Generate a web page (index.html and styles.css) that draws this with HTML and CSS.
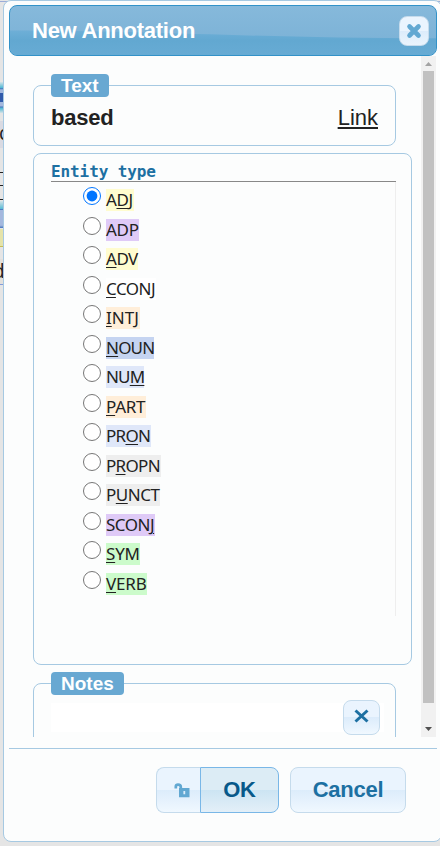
FILE: index.html
```html
<!DOCTYPE html>
<html lang="en">
<head>
<meta charset="utf-8">
<title>New Annotation</title>
<link rel="stylesheet" href="styles.css">
</head>
<body>
<div class="backdrop" aria-hidden="true">
  <i class="bd-top"></i><i class="bd-box"></i><i class="bd-band"><b>c</b></i><i class="bd-lines"></i><i class="bd-blue"></i><i class="bd-yellow"></i><i class="bd-word"><b>d</b></i>
</div>
<main class="dialog">
  <header class="titlebar">
    <svg class="gloss" viewBox="0 0 426 50" preserveAspectRatio="none"><path d="M0 25C150 25 250 33 426 33V50H0Z" fill="url(#g)"/><defs><linearGradient id="g" x2="0" y2="1"><stop stop-color="#6eafd7"/><stop offset=".4" stop-color="#62a8d1"/><stop offset="1" stop-color="#67abd4"/></linearGradient></defs></svg>
    <h1>New Annotation</h1>
    <button class="close" aria-label="Close"><svg width="16" height="16" viewBox="0 0 16 16"><path d="M3.5 3.5 12.5 12.5M12.5 3.5 3.5 12.5" stroke="#62a8d2" stroke-width="4.6" stroke-linecap="round"/></svg></button>
  </header>
  <div class="content">
    <div class="forms">
      <section class="box text-box">
        <h2 class="legend">Text</h2>
        <div class="text-row"><strong>based</strong><a>Link</a></div>
      </section>
      <section class="box entity-box">
        <h3>Entity type</h3>
        <div class="types">
          <label><input type="radio" name="t" checked><span class="tag yellow w-adj">A<u>D</u>J</span></label>
          <label><input type="radio" name="t"><span class="tag purple w-adp">ADP</span></label>
          <label><input type="radio" name="t"><span class="tag yellow w-adv"><u>A</u>DV</span></label>
          <label><input type="radio" name="t"><span class="tag white w-cconj"><u>C</u>CONJ</span></label>
          <label><input type="radio" name="t"><span class="tag orange w-intj"><u>I</u>NTJ</span></label>
          <label><input type="radio" name="t"><span class="tag blue w-noun"><u>N</u>OUN</span></label>
          <label><input type="radio" name="t"><span class="tag pale w-num">NU<u>M</u></span></label>
          <label><input type="radio" name="t"><span class="tag orange w-part"><u>P</u>ART</span></label>
          <label><input type="radio" name="t"><span class="tag pale w-pron">PR<u>O</u>N</span></label>
          <label><input type="radio" name="t"><span class="tag gray w-propn">P<u>R</u>OPN</span></label>
          <label><input type="radio" name="t"><span class="tag gray w-punct">P<u>U</u>NCT</span></label>
          <label><input type="radio" name="t"><span class="tag purple w-sconj">SCON<u>J</u></span></label>
          <label><input type="radio" name="t"><span class="tag green w-sym"><u>S</u>YM</span></label>
          <label><input type="radio" name="t"><span class="tag green w-verb"><u>V</u>ERB</span></label>
        </div>
      </section>
      <section class="box notes-box">
        <h2 class="legend">Notes</h2>
        <div class="notes-row"><button class="btn clear" aria-label="Clear"><svg width="15" height="14" viewBox="0 0 15 14"><path d="M1.5 1.5 13.5 12.5M13.5 1.5 1.5 12.5" stroke="#1d70a2" stroke-width="3"/></svg></button></div>
      </section>
    </div>
    <div class="scrollbar">
      <svg width="7" height="4" viewBox="0 0 7 4"><path d="M0 4 3.5 0 7 4Z" fill="#a3a3a3"/></svg>
      <i class="thumb"></i>
      <svg width="7" height="4" viewBox="0 0 7 4"><path d="M0 0 3.5 4 7 0Z" fill="#505050"/></svg>
    </div>
  </div>
  <footer class="actions">
    <button class="btn lock" aria-label="Unlocked"><svg width="16" height="15" viewBox="0 0 16 15"><path d="M1.8 5.5V3.5Q1.8 1.6 4 1.6 6.8 1.6 6.8 4V7" fill="none" stroke="#62a8d2" stroke-width="2.7"/><path fill-rule="evenodd" d="M5 5H15.5V14.3H5ZM9.4 8V11.3H11.2V8Z" fill="#62a8d2"/></svg></button><button class="btn ok">OK</button><button class="btn cancel">Cancel</button>
  </footer>
</main>
</body>
</html>
```
FILE: styles.css
```css
* { box-sizing: border-box; }
body {
  margin: 0;
  width: 440px;
  height: 846px;
  overflow: hidden;
  background: #e5e5e5;
  font-family: "Liberation Sans", Arial, sans-serif;
  color: #222;
}
h1, h2, h3 { margin: 0; }
button { padding: 0; font: inherit; }

.backdrop { position: absolute; inset: 0 auto auto 0; width: 440px; height: 290px; overflow: hidden; }
.backdrop i { position: absolute; left: 0; width: 4px; font-style: normal; overflow: hidden; }
.backdrop .bd-top { top: 1px; width: 440px; height: 1px; background: #9cacd8; }
.bd-box { top: 82px; height: 31px; background: linear-gradient(#d5e3e7, #55bad5 18%, #4474bd 22%, #a4b8de 25%, #a4b8de 35%, #315bab 36%, #315bab 65%, #a4b8de 66%, #a4b8de 78%, #4474bd 80%, #55bad5 85%, #d5e3e7); }
.bd-band { top: 121px; height: 27px; background: #d9dae2; }
.backdrop b { display: block; font: 19px/25px "Noto Sans", sans-serif; margin-left: -7px; }
.backdrop .bd-band b { margin-left: -1px; }
.bd-lines { top: 172px; height: 28px; border-top: 1px solid #222; border-bottom: 1px solid #222; background: linear-gradient(transparent 12px, #222 12px, #222 13px, transparent 13px); }
.bd-blue { top: 201px; height: 27px; background: linear-gradient(#d5e3e7, #55bad5 30%, #4474bd 31%, #a4b8de 35%, #a4b8de 90%, #4474bd); }
.bd-yellow { top: 229px; height: 18px; background: #e5e3a9; border-bottom: 1px solid #c6bd55; }
.bd-word { top: 259px; height: 26px; border-bottom: 1px solid #829bdb; background: #e3e0dc; }

.dialog {
  position: relative;
  display: flex;
  flex-direction: column;
  margin-left: 3px;
  width: 439px;
  height: 842px;
  padding: 4px 4px 4px 5px;
  border: 1px solid #a6c9e2;
  border-radius: 8px;
  background: #fcfdfd;
}
.titlebar {
  position: relative;
  display: flex;
  align-items: center;
  justify-content: space-between;
  flex: none;
  width: 428px;
  height: 51px;
  padding: 0 7px 0 22px;
  border: 1px solid #3292c8;
  border-radius: 8px;
  background: linear-gradient(#86b9db, #79b0d5);
  overflow: hidden;
}
.gloss { position: absolute; inset: 0; width: 100%; height: 100%; }
.titlebar h1 { position: relative; color: #fff; font-size: 22px; line-height: 26px; letter-spacing: -.25px; }
.close {
  position: relative;
  display: flex;
  align-items: center;
  justify-content: center;
  width: 30px;
  height: 30px;
  border: 1px solid #c5dbec;
  border-radius: 8px;
  background: linear-gradient(#eaf4fe 50%, #dcecfb 50%, #eaf4fd);
}
.content { display: flex; justify-content: space-between; height: 681px; width: 427px; overflow: hidden; flex: none; }
.forms { padding: 29px 0 0 24px; }
.box { border: 1px solid #a6c9e2; border-radius: 8px; padding: 0 17px; }
.text-box, .notes-box { width: 363px; }
.text-box { height: 61px; }
.entity-box { width: 379px; height: 512px; margin-top: 7px; }
.notes-box { height: 100px; margin-top: 18px; }
.legend {
  width: fit-content;
  height: 23px;
  margin-top: -12px;
  padding: 0 10px;
  border-radius: 4px;
  background: #68a8d2;
  color: #fff;
  font-size: 19px;
  line-height: 23px;
}
.text-row { display: flex; justify-content: space-between; padding: 8px 0 0; font-size: 22px; line-height: 26px; letter-spacing: -.25px; }
.text-row a { text-decoration: underline; text-underline-offset: 2px; text-decoration-thickness: 2px; letter-spacing: 0; }
.entity-box h3 {
  width: 345px;
  height: 28px;
  padding-top: 7px;
  border-bottom: 1px solid #888;
  color: #1d70a2;
  font: bold 16px/22px "DejaVu Sans Mono", monospace;
  letter-spacing: -.1px;
}
.types {
  display: grid;
  grid-auto-rows: 29.54px;
  width: 345px;
  height: 434px;
  padding: 4px 0 0 32px;
  border-right: 1px solid #eee;
}
.types label { display: flex; align-items: flex-start; }
.types input { width: 18px; height: 18px; margin: 1px 5px 0 0; }
.tag { height: 22px; margin-top: 3px; font: 17px/22px "Noto Sans", sans-serif; white-space: nowrap; }
.tag u { text-decoration-thickness: 1px; text-underline-offset: 2px; }
.yellow { background: #fffccf; }
.purple { background: #dfcaf7; }
.white { background: #fff; }
.orange { background: #ffeed9; }
.blue { background: #c5d4f1; }
.pale { background: #dfe7f9; }
.gray { background: #eee; }
.green { background: #ccfbcb; }
.w-adj { width: 28px; letter-spacing: -.4px; }
.w-adp { width: 33px; letter-spacing: -.3px; }
.w-adv { width: 32px; letter-spacing: -.5px; }
.w-cconj { width: 50px; letter-spacing: -.5px; }
.w-intj { width: 34px; letter-spacing: 0; }
.w-noun { width: 48px; letter-spacing: -.8px; }
.w-num { width: 38px; letter-spacing: -.8px; }
.w-part { width: 40px; letter-spacing: -.3px; }
.w-pron { width: 45px; letter-spacing: -.7px; }
.w-propn { width: 55px; letter-spacing: -.7px; }
.w-punct { width: 54px; letter-spacing: -.5px; }
.w-sconj { width: 49px; letter-spacing: -.5px; }
.w-sym { width: 34px; letter-spacing: -.2px; }
.w-verb { width: 41px; letter-spacing: -.2px; }
.notes-row { display: flex; justify-content: flex-end; height: 29px; margin-top: 8px; padding-right: 5px; margin-right: -6px; background: #fff; }
.btn {
  display: flex;
  align-items: center;
  justify-content: center;
  border: 1px solid #c5dbec;
  border-radius: 8px;
  background: linear-gradient(#eaf4fe 50%, #dcecfb 50%, #f0f8ff);
  color: #1d70a2;
  font-size: 22px;
  font-weight: bold;
  letter-spacing: -.25px;
}
.clear { width: 37px; height: 35px; margin: -3px -1px 0 0; padding-bottom: 4px; }
.scrollbar { display: flex; flex-direction: column; align-items: center; justify-content: space-between; width: 15px; height: 681px; padding: 6px 0; background: #f1f1f1; }
.thumb { width: 11px; height: 632px; margin: 5px 0 auto; background: #c1c1c1; }
.actions { display: flex; justify-content: flex-end; width: 428px; height: 89px; margin-top: 11px; padding: 18px 31px 0 0; border-top: 1px solid #a6c9e2; }
.actions .btn { height: 46px; }
.actions .lock { width: 44px; border-right: 0; border-radius: 8px 0 0 8px; padding: 1px 0 0 7px; }
.actions .ok { width: 79px; border-color: #79b7e7; border-radius: 0 8px 8px 0; background: linear-gradient(#dcecf5 50%, #cce4f3 50%, #e3eff8); color: #07598a; margin-right: 11px; }
.actions .cancel { width: 116px; }
```
